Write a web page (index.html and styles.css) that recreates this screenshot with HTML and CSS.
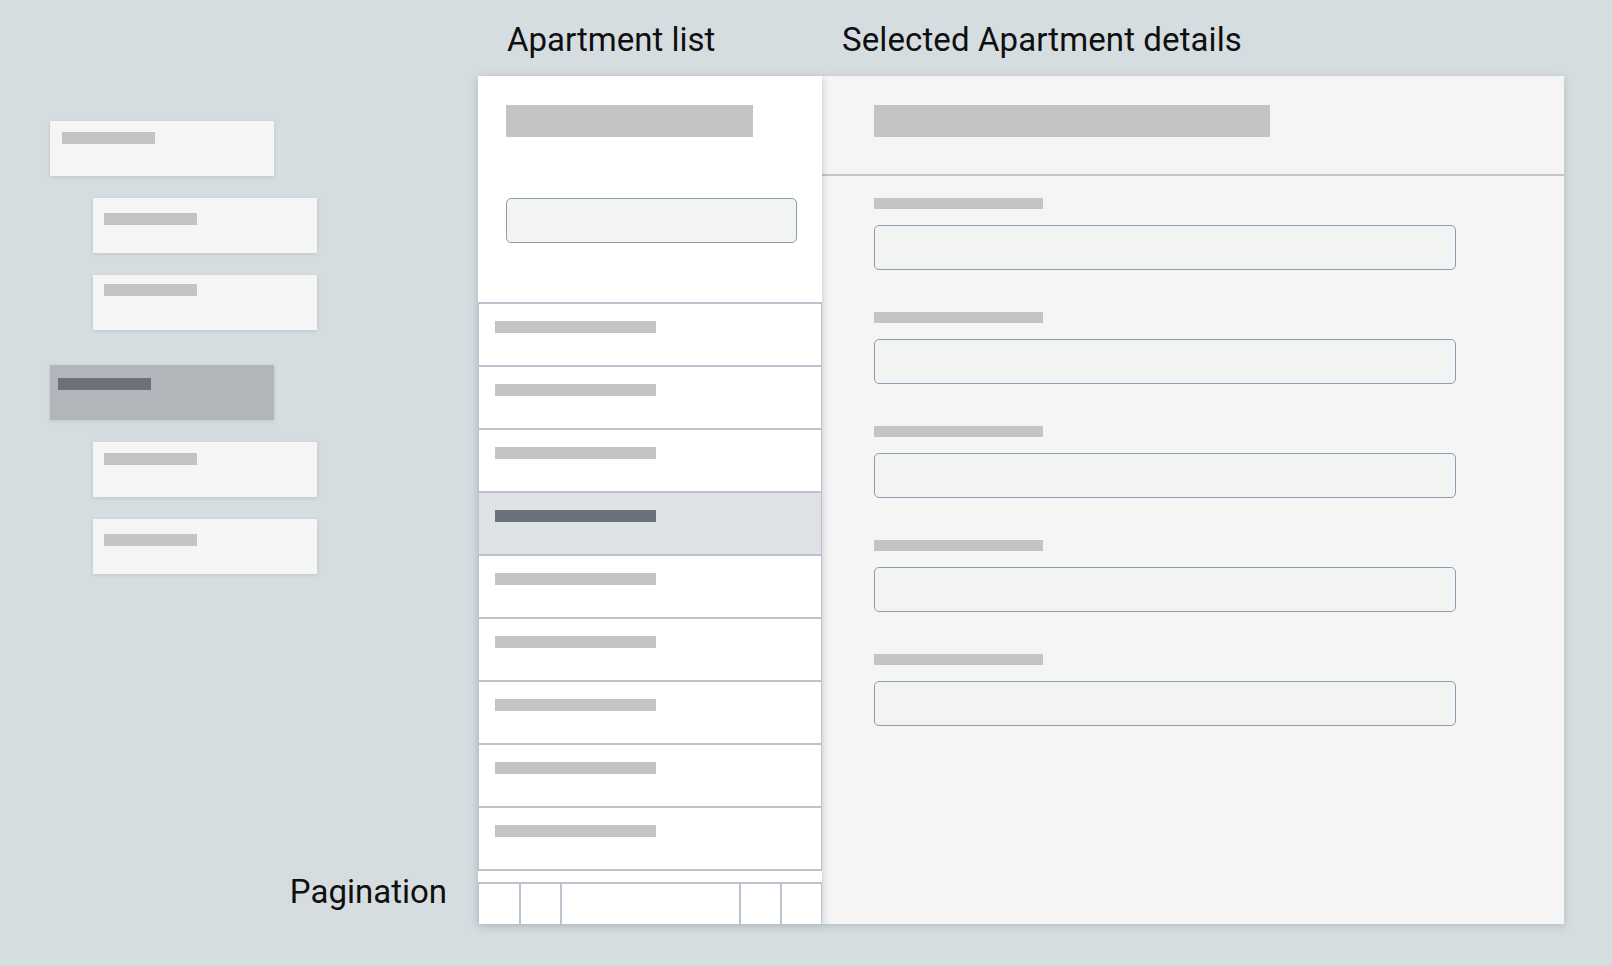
FILE: index.html
```html
<!DOCTYPE html>
<html lang="en">
<head>
<meta charset="utf-8">
<title>Apartments wireframe</title>
<link rel="stylesheet" href="styles.css">
</head>
<body>
<div class="page">
  <aside class="sidebar">
    <nav class="nav">
      <div class="nav-card"><span class="nav-bar"></span></div>
      <div class="nav-card nav-card--sub"><span class="nav-bar"></span></div>
      <div class="nav-card nav-card--sub nav-card--tight"><span class="nav-bar"></span></div>
      <div class="nav-card nav-card--active"><span class="nav-bar"></span></div>
      <div class="nav-card nav-card--sub nav-card--mid"><span class="nav-bar"></span></div>
      <div class="nav-card nav-card--sub"><span class="nav-bar"></span></div>
    </nav>
    <div class="caption caption--pagination">Pagination</div>
  </aside>

  <main class="workspace">
    <div class="titles">
      <div class="caption caption--list">Apartment list</div>
      <div class="caption caption--details">Selected Apartment details</div>
    </div>
    <div class="panels">
      <section class="list-panel">
        <div class="list-header">
          <div class="list-title"></div>
          <div class="search"></div>
        </div>
        <div class="rows">
          <div class="row"><span class="row-bar"></span></div>
          <div class="row"><span class="row-bar"></span></div>
          <div class="row"><span class="row-bar"></span></div>
          <div class="row row--selected"><span class="row-bar"></span></div>
          <div class="row"><span class="row-bar"></span></div>
          <div class="row"><span class="row-bar"></span></div>
          <div class="row"><span class="row-bar"></span></div>
          <div class="row"><span class="row-bar"></span></div>
          <div class="row"><span class="row-bar"></span></div>
        </div>
        <div class="strip"></div>
        <div class="pager">
          <div class="pager-cell"></div>
          <div class="pager-cell"></div>
          <div class="pager-cell"></div>
          <div class="pager-cell"></div>
          <div class="pager-cell"></div>
        </div>
      </section>

      <section class="details-panel">
        <div class="details-header">
          <div class="details-title"></div>
        </div>
        <div class="details-body">
          <div class="field"><span class="field-label"></span><div class="field-input"></div></div>
          <div class="field"><span class="field-label"></span><div class="field-input"></div></div>
          <div class="field"><span class="field-label"></span><div class="field-input"></div></div>
          <div class="field"><span class="field-label"></span><div class="field-input"></div></div>
          <div class="field"><span class="field-label"></span><div class="field-input"></div></div>
        </div>
      </section>
    </div>
  </main>
</div>
</body>
</html>
```

FILE: styles.css
```css
* { box-sizing: border-box; }

html, body {
  margin: 0;
  padding: 0;
  background: #d6dde0;
  font-family: Roboto, "Liberation Sans", sans-serif;
  color: #0f0f0f;
}

.page {
  display: flex;
  height: 966px;
  overflow: hidden;
}

/* ---------- sidebar ---------- */
.sidebar {
  width: 478px;
  flex: none;
  display: flex;
  flex-direction: column;
  padding: 121px 31px 54px 50px;
}

.nav {
  display: flex;
  flex-direction: column;
  gap: 22px;
}

.nav-card {
  width: 224px;
  height: 55px;
  background: #f5f5f5;
  box-shadow: 0 1px 4px rgba(60, 70, 90, 0.16);
  padding: 11px 0 0 12px;
}

.nav-card--sub {
  margin-left: 43px;
  padding: 15px 0 0 11px;
}

.nav-card--tight { padding-top: 9px; }
.nav-card--mid { padding-top: 11px; }

.nav-card--active {
  background: #b2b5b9;
  margin-top: 13px;
  padding: 13px 0 0 8px;
}

.nav-bar {
  display: block;
  width: 93px;
  height: 12px;
  background: #c4c4c4;
}

.nav-card--active .nav-bar { background: #6c727a; }

.caption {
  font-size: 33px;
  line-height: 40px;
  font-weight: 400;
  white-space: nowrap;
}

.caption--pagination {
  margin-top: auto;
  text-align: right;
}

/* ---------- workspace ---------- */
.workspace {
  display: flex;
  flex-direction: column;
}

.titles {
  display: flex;
  height: 76px;
  padding-top: 20px;
}

.caption--list {
  width: 344px;
  padding-left: 29px;
}

.caption--details {
  padding-left: 20px;
  letter-spacing: 0.1px;
}

.panels {
  display: flex;
}

/* ---------- list panel ---------- */
.list-panel {
  width: 344px;
  height: 848px;
  background: #ffffff;
  display: flex;
  flex-direction: column;
  box-shadow: 0 2px 8px rgba(60, 70, 90, 0.28);
  position: relative;
  z-index: 1;
}

.list-header {
  height: 226px;
  padding: 29px 0 0 28px;
}

.list-title {
  width: 247px;
  height: 32px;
  background: #c4c4c4;
}

.search {
  margin-top: 61px;
  width: 291px;
  height: 45px;
  background: #f2f4f4;
  border: 1px solid #8a9db1;
  border-radius: 5px;
}

.rows {
  border-bottom: 2px solid #c0c1cf;
}

.row {
  height: 63px;
  border-top: 2px solid #c0c1cf;
  border-left: 1px solid #c0c1cf;
  border-right: 1px solid #c0c1cf;
  padding: 17px 0 0 16px;
}

.row--selected {
  background: #dfe2e5;
}

.row-bar {
  display: block;
  width: 161px;
  height: 12px;
  background: #c4c4c4;
}

.row--selected .row-bar { background: #6c727a; }

.strip {
  height: 11px;
}

.pager {
  flex: 1;
  display: grid;
  grid-template-columns: 40px 39px 1fr 39px 39px;
  gap: 2px;
  background: #c0c1cf;
  border-top: 2px solid #c0c1cf;
  border-left: 1px solid #c0c1cf;
  border-right: 1px solid #c0c1cf;
}

.pager-cell { background: #ffffff; }

/* ---------- details panel ---------- */
.details-panel {
  width: 742px;
  height: 848px;
  background: #f5f5f5;
  box-shadow: 0 2px 8px rgba(60, 70, 90, 0.22);
}

.details-header {
  height: 100px;
  border-bottom: 2px solid #c4c4c4;
  padding: 29px 0 0 52px;
}

.details-title {
  width: 396px;
  height: 32px;
  background: #c4c4c4;
}

.details-body {
  padding: 22px 0 0 52px;
  display: flex;
  flex-direction: column;
  gap: 42px;
}

.field {
  display: flex;
  flex-direction: column;
  gap: 16px;
}

.field-label {
  display: block;
  width: 169px;
  height: 11px;
  background: #c4c4c4;
}

.field-input {
  width: 582px;
  height: 45px;
  background: #f2f4f4;
  border: 1px solid #8a9db1;
  border-radius: 5px;
}
```
